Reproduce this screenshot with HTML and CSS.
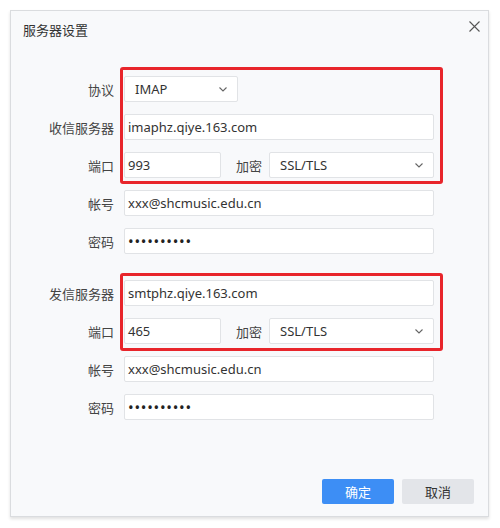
FILE: index.html
```html
<!DOCTYPE html>
<html lang="zh">
<head>
<meta charset="utf-8">
<link rel="stylesheet" href="styles.css">
</head>
<body>
<div class="dialog">
  <div class="header">
    <span class="title">服务器设置</span>
    <svg class="close" width="11" height="11" viewBox="0 0 11 11"><path d="M0.5 0.5L10.5 10.5M10.5 0.5L0.5 10.5" stroke="#555" stroke-width="1.1" fill="none"/></svg>
  </div>
  <div class="form">
    <div class="group">
      <div class="row">
        <label class="lbl">协议</label>
        <div class="field select short">IMAP<span class="chev"><svg width="8" height="5" viewBox="0 0 8 5"><path d="M0.5 0.5L4 4L7.5 0.5" stroke="#666" stroke-width="1.1" fill="none"/></svg></span></div>
      </div>
      <div class="row">
        <label class="lbl">收信服务器</label>
        <div class="field">imaphz.qiye.163.com</div>
      </div>
      <div class="row">
        <label class="lbl">端口</label>
        <div class="pair">
          <div class="field port">993</div>
          <label class="lbl2">加密</label>
          <div class="field select grow">SSL/TLS<span class="chev"><svg width="8" height="5" viewBox="0 0 8 5"><path d="M0.5 0.5L4 4L7.5 0.5" stroke="#666" stroke-width="1.1" fill="none"/></svg></span></div>
        </div>
      </div>
      <div class="row">
        <label class="lbl">帐号</label>
        <div class="field">xxx@shcmusic.edu.cn</div>
      </div>
      <div class="row">
        <label class="lbl">密码</label>
        <div class="field dots">••••••••••</div>
      </div>
    </div>
    <div class="group">
      <div class="row">
        <label class="lbl">发信服务器</label>
        <div class="field">smtphz.qiye.163.com</div>
      </div>
      <div class="row">
        <label class="lbl">端口</label>
        <div class="pair">
          <div class="field port">465</div>
          <label class="lbl2">加密</label>
          <div class="field select grow">SSL/TLS<span class="chev"><svg width="8" height="5" viewBox="0 0 8 5"><path d="M0.5 0.5L4 4L7.5 0.5" stroke="#666" stroke-width="1.1" fill="none"/></svg></span></div>
        </div>
      </div>
      <div class="row">
        <label class="lbl">帐号</label>
        <div class="field">xxx@shcmusic.edu.cn</div>
      </div>
      <div class="row">
        <label class="lbl">密码</label>
        <div class="field dots">••••••••••</div>
      </div>
    </div>
  </div>
  <div class="footer">
    <button class="btn primary">确定</button>
    <button class="btn">取消</button>
  </div>
</div>
<div class="mark mark1"></div>
<div class="mark mark2"></div>
</body>
</html>
```

FILE: styles.css
```css
html, body {
  margin: 0;
  padding: 0;
  background: #ffffff;
}
body {
  position: relative;
  width: 500px;
  height: 528px;
  overflow: hidden;
  font-family: "Noto Sans", "Noto Sans CJK SC", sans-serif;
  font-size: 13px;
  color: #333;
}
.dialog {
  position: relative;
  margin: 10px 0 0 10px;
  width: 477px;
  height: 505px;
  background: #f8f9fb;
  border: 1px solid #dadcdf;
  box-shadow: 0 2px 3px rgba(0,0,0,0.12);
  display: flex;
  flex-direction: column;
}
.header {
  display: flex;
  justify-content: space-between;
  align-items: center;
  height: 20px;
  margin-top: 9px;
  padding: 0 8px 0 12px;
}
.title {
  font-family: "Noto Sans CJK SC", sans-serif;
  font-size: 13px;
  color: #333;
  line-height: 20px;
}
.close {
  margin-top: -8px;
}
.form {
  flex: 1;
  padding-top: 36px;
}
.group {
  display: flex;
  flex-direction: column;
  gap: 12px;
}
.group + .group {
  margin-top: 26px;
}
.row {
  display: grid;
  grid-template-columns: 103px 310px;
  column-gap: 10px;
  align-items: center;
}
.lbl {
  text-align: right;
  font-family: "Noto Sans CJK SC", sans-serif;
  font-size: 13px;
  color: #444;
}
.lbl2 {
  font-family: "Noto Sans CJK SC", sans-serif;
  font-size: 13px;
  color: #444;
  margin: 0 7px 0 15px;
}
.field {
  box-sizing: border-box;
  height: 26px;
  line-height: 24px;
  background: #fff;
  border: 1px solid #e1e3e6;
  border-radius: 2px;
  padding: 0 3px;
  color: #333;
  white-space: nowrap;
  overflow: hidden;
}
.select {
  display: flex;
  justify-content: space-between;
  align-items: center;
  padding: 0 10px 0 10px;
}
.short {
  width: 114px;
}
.chev {
  display: flex;
}
.pair {
  display: flex;
  align-items: center;
}
.port {
  width: 97px;
}
.grow {
  flex: 1;
}
.dots {
  letter-spacing: 0.75px;
  font-size: 15px;
  color: #222;
}
.footer {
  display: flex;
  justify-content: flex-end;
  gap: 8px;
  padding: 0 14px 12px 0;
}
.btn {
  width: 72px;
  height: 25px;
  border: none;
  border-radius: 2px;
  background: #e3e5e9;
  color: #333;
  font-family: "Noto Sans CJK SC", sans-serif;
  font-size: 13px;
  padding: 0;
}
.btn.primary {
  background: #3d8ef5;
  color: #fff;
}
.mark {
  position: absolute;
  left: 120px;
  width: 323px;
  box-sizing: border-box;
  border: 3px solid #e8252b;
  border-radius: 3px;
}
.mark1 {
  top: 67px;
  height: 117px;
}
.mark2 {
  top: 273px;
  height: 78px;
}
```
